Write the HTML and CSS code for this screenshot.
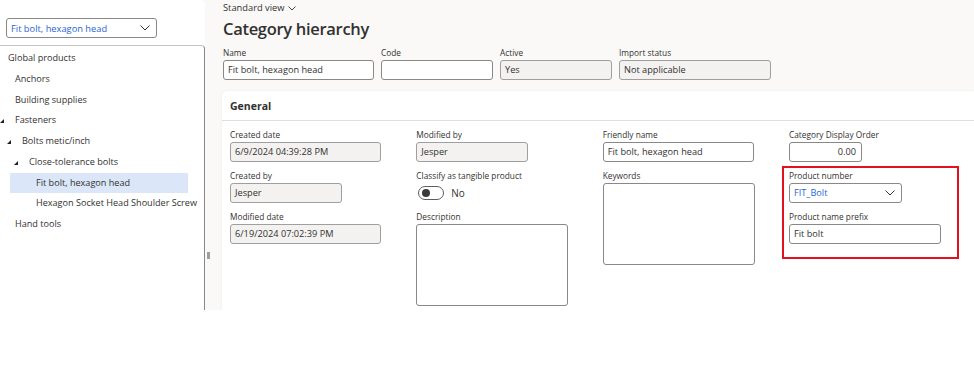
FILE: index.html
```html
<!DOCTYPE html>
<html lang="en">
<head>
    <meta charset="UTF-8">
    <meta name="viewport" content="width=device-width, initial-scale=1.0">
    <title>Category hierarchy</title>
    <link rel="stylesheet" href="styles.css">
</head>
<body>
    <div class="app">
        <aside class="nav">
            <div class="nav-top">
                <div class="combo">
                    <span class="combo-text">Fit bolt, hexagon head</span>
                    <svg class="chev" width="10" height="6" viewBox="0 0 10 6"><path d="M0.5 0.5 L5 5 L9.5 0.5" fill="none" stroke="#323130" stroke-width="1"/></svg>
                </div>
            </div>
            <ul class="tree">
                <li class="node lvl0">Global products</li>
                <li class="node lvl1">Anchors</li>
                <li class="node lvl1">Building supplies</li>
                <li class="node lvl1"><span class="caret"></span>Fasteners</li>
                <li class="node lvl2"><span class="caret"></span>Bolts metic/inch</li>
                <li class="node lvl3"><span class="caret"></span>Close-tolerance bolts</li>
                <li class="node lvl4 selected">Fit bolt, hexagon head</li>
                <li class="node lvl4">Hexagon Socket Head Shoulder Screw</li>
                <li class="node lvl1">Hand tools</li>
            </ul>
        </aside>

        <div class="splitter"><span class="grip"></span></div>

        <main class="main">
            <div class="view-name">Standard view
                <svg width="8" height="5" viewBox="0 0 8 5"><path d="M0.5 0.5 L4 4 L7.5 0.5" fill="none" stroke="#323130" stroke-width="0.9"/></svg>
            </div>
            <h1 class="title">Category hierarchy</h1>

            <div class="header-fields">
                <div class="field w151">
                    <label>Name</label>
                    <div class="input">Fit bolt, hexagon head</div>
                </div>
                <div class="field w112">
                    <label>Code</label>
                    <div class="input"></div>
                </div>
                <div class="field w112">
                    <label>Active</label>
                    <div class="input readonly">Yes</div>
                </div>
                <div class="field w152">
                    <label>Import status</label>
                    <div class="input readonly">Not applicable</div>
                </div>
            </div>

            <section class="card">
                <div class="card-head">General</div>
                <div class="card-body">
                    <div class="col">
                        <div class="field w151">
                            <label>Created date</label>
                            <div class="input readonly">6/9/2024 04:39:28 PM</div>
                        </div>
                        <div class="field w112">
                            <label>Created by</label>
                            <div class="input readonly">Jesper</div>
                        </div>
                        <div class="field w151">
                            <label>Modified date</label>
                            <div class="input readonly">6/19/2024 07:02:39 PM</div>
                        </div>
                    </div>

                    <div class="col">
                        <div class="field w112">
                            <label>Modified by</label>
                            <div class="input readonly">Jesper</div>
                        </div>
                        <div class="field">
                            <label>Classify as tangible product</label>
                            <div class="toggle-row">
                                <span class="toggle"><span class="knob"></span></span>
                                <span class="toggle-text">No</span>
                            </div>
                        </div>
                        <div class="field w152">
                            <label>Description</label>
                            <div class="textarea"></div>
                        </div>
                    </div>

                    <div class="col">
                        <div class="field w151">
                            <label>Friendly name</label>
                            <div class="input">Fit bolt, hexagon head</div>
                        </div>
                        <div class="field w152">
                            <label>Keywords</label>
                            <div class="textarea"></div>
                        </div>
                    </div>

                    <div class="col">
                        <div class="field w73">
                            <label>Category Display Order</label>
                            <div class="input number">0.00</div>
                        </div>
                        <div class="highlight">
                            <div class="field w113">
                                <label>Product number</label>
                                <div class="input select">
                                    <span class="link">FIT_Bolt</span>
                                    <svg width="10" height="6" viewBox="0 0 10 6"><path d="M0.5 0.5 L5 5 L9.5 0.5" fill="none" stroke="#323130" stroke-width="1"/></svg>
                                </div>
                            </div>
                            <div class="field w152">
                                <label>Product name prefix</label>
                                <div class="input">Fit bolt</div>
                            </div>
                        </div>
                    </div>
                </div>
            </section>
        </main>
    </div>
</body>
</html>
```

FILE: styles.css
```css
body {
    margin: 0;
    background-color: #fff;
    font-family: "Open Sans", "Noto Sans", sans-serif;
    color: #323130;
}
.app {
    display: flex;
    height: 310px;
    background-color: #faf9f8;
    overflow: hidden;
}

/* left navigation */
.nav {
    width: 205px;
    flex-shrink: 0;
    display: flex;
    flex-direction: column;
    background-color: #fff;
    border-top-right-radius: 5px;
}
.nav-top {
    height: 45px;
    box-sizing: border-box;
    padding: 18px 0 0 6px;
}
.combo {
    width: 151px;
    height: 20px;
    box-sizing: border-box;
    border: 1px solid #8a8886;
    border-radius: 3px;
    display: flex;
    align-items: center;
    justify-content: space-between;
    padding: 0 6px 0 4px;
}
.combo-text {
    color: #2a63d8;
    font-size: 9.3px;
}
.tree {
    list-style: none;
    margin: 0;
    padding: 2px 0 0 0;
    flex: 1;
    border-top: 1px solid #c8c6c4;
    border-right: 1px solid #8a8886;
    border-top-right-radius: 4px;
}
.node {
    height: 20.75px;
    line-height: 20.75px;
    font-size: 9.1px;
    white-space: nowrap;
    display: flex;
    align-items: center;
}
.lvl0 { padding-left: 8px; }
.lvl1 { padding-left: 15px; }
.lvl2 { padding-left: 22px; }
.lvl3 { padding-left: 29px; }
.lvl4 { padding-left: 36px; }
.caret {
    width: 0;
    height: 0;
    border-left: 4px solid transparent;
    border-bottom: 4px solid #201f1e;
    margin-left: -15px;
    margin-right: 11px;
    margin-top: 1px;
}
.node.selected {
    margin-left: 10px;
    margin-right: 16px;
    padding-left: 26px;
    background-color: #dbe6f9;
}

.splitter {
    width: 17px;
    flex-shrink: 0;
    position: relative;
}
.grip {
    position: absolute;
    left: 2px;
    top: 252px;
    width: 3px;
    height: 7px;
    background-color: #a19f9d;
}

/* main content */
.main {
    flex: 1;
    padding-left: 1px;
    min-width: 0;
}
.view-name {
    font-size: 9.3px;
    height: 16px;
    line-height: 16px;
    display: flex;
    align-items: center;
    gap: 4px;
}
.title {
    margin: 0;
    font-size: 16.5px;
    font-weight: 600;
    height: 28px;
    line-height: 26px;
    letter-spacing: -0.3px;
}
.header-fields {
    display: flex;
    gap: 7px;
    margin-top: 2px;
}
.field label {
    display: block;
    font-size: 8.3px;
    height: 14px;
    line-height: 14px;
    white-space: nowrap;
}
.w73 { width: 73px; }
.w112 { width: 112px; }
.w113 { width: 113px; }
.w151 { width: 151px; }
.w152 { width: 152px; }

.input {
    height: 20px;
    box-sizing: border-box;
    border: 1px solid #8a8886;
    border-radius: 3px;
    background-color: #fff;
    font-size: 9.2px;
    line-height: 18px;
    padding: 0 4px;
    white-space: nowrap;
    overflow: hidden;
}
.input.readonly {
    background-color: #f3f2f1;
    border-color: #a19f9d;
}
.input.number {
    text-align: right;
    padding-right: 5px;
}
.input.select {
    display: flex;
    align-items: center;
    justify-content: space-between;
    padding-right: 6px;
}
.link {
    color: #2a63d8;
}
.textarea {
    height: 82px;
    box-sizing: border-box;
    border: 1px solid #8a8886;
    border-radius: 3px;
    background-color: #fff;
}

.card {
    margin-top: 11px;
    margin-left: -1px;
    height: 230px;
    background-color: #fff;
    border-top-left-radius: 5px;
    box-shadow: 0 0 2px rgba(0, 0, 0, 0.08);
}
.card-head {
    height: 30px;
    box-sizing: border-box;
    border-bottom: 1px solid #e1dfdd;
    padding-left: 8px;
    font-size: 10.5px;
    font-weight: 700;
    line-height: 30px;
}
.card-body {
    display: grid;
    grid-template-columns: repeat(4, 186.33px);
    padding: 7px 0 0 8px;
}
.col {
    display: flex;
    flex-direction: column;
    align-items: flex-start;
    gap: 7px;
}

.toggle-row {
    height: 20px;
    display: flex;
    align-items: center;
    padding-left: 2px;
}
.toggle {
    width: 26px;
    height: 14px;
    box-sizing: border-box;
    border: 1px solid #605e5c;
    border-radius: 7px;
    display: flex;
    align-items: center;
    padding-left: 3px;
}
.knob {
    width: 8px;
    height: 8px;
    border-radius: 50%;
    background-color: #3b3a39;
}
.toggle-text {
    font-size: 10px;
    margin-left: 7px;
}

.highlight {
    margin-top: -3px;
    margin-left: -7px;
    width: 177px;
    height: 93px;
    box-sizing: border-box;
    border: 2px solid #e3101d;
    padding: 1px 0 0 5px;
    display: flex;
    flex-direction: column;
    gap: 7px;
}
```
